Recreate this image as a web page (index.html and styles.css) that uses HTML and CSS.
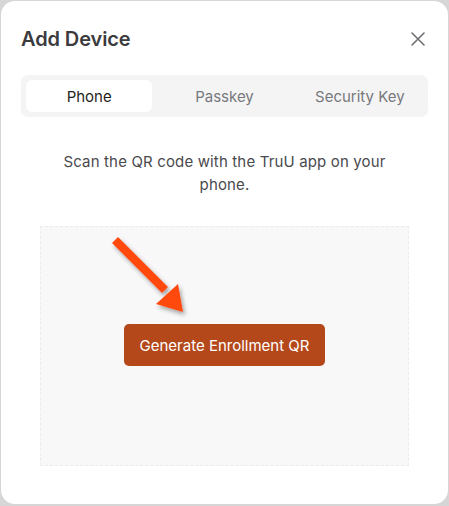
FILE: index.html
```html
<!DOCTYPE html>
<html>
<head>
<meta charset="utf-8">
<link rel="stylesheet" href="styles.css">
</head>
<body>
<div class="modal">
  <div class="header">
    <h1 class="title">Add Device</h1>
    <button class="close" aria-label="Close">
      <svg width="16" height="16" viewBox="0 0 16 16"><path d="M2 2L14 14M14 2L2 14" stroke="#6f6f73" stroke-width="1.6" stroke-linecap="round"/></svg>
    </button>
  </div>
  <div class="tabs">
    <div class="tab active">Phone</div>
    <div class="tab">Passkey</div>
    <div class="tab">Security Key</div>
  </div>
  <p class="desc">Scan the QR code with the TruU app on your phone.</p>
  <div class="qrbox">
    <svg class="arrow" width="100" height="100" viewBox="0 0 100 100">
      <defs>
        <filter id="sh" x="-20%" y="-20%" width="150%" height="150%">
          <feDropShadow dx="2" dy="3" stdDeviation="2" flood-color="#000" flood-opacity="0.35"/>
        </filter>
      </defs>
      <g filter="url(#sh)" fill="#ff4a0e">
        <path d="M9 13 L15 7 L65 57 L59 63 Z"/>
        <path d="M53 74 L75 54 L80 82 Z"/>
      </g>
    </svg>
    <button class="generate">Generate Enrollment QR</button>
  </div>
</div>
</body>
</html>
```
FILE: styles.css
```css
html, body {
  margin: 0;
  padding: 0;
}
body {
  background: #d6d6d6;
  width: 449px;
  height: 506px;
  font-family: "Inter", "Noto Sans", sans-serif;
  overflow: hidden;
}
.modal {
  box-sizing: border-box;
  margin: 1px 1px 0 1px;
  width: 447px;
  height: 503px;
  background: #fff;
  border-radius: 14px;
  padding: 20px 20px 0 20px;
  display: flex;
  flex-direction: column;
}
.header {
  display: flex;
  justify-content: space-between;
  align-items: center;
  height: 36px;
}
.title {
  margin: 0;
  font-size: 20px;
  font-weight: 600;
  color: #3b3b3e;
  letter-spacing: -0.1px;
}
.close {
  border: 0;
  background: none;
  padding: 0;
  width: 16px;
  height: 16px;
  margin-right: 2px;
  display: flex;
}
.tabs {
  margin-top: 18px;
  height: 42px;
  box-sizing: border-box;
  background: #f4f4f5;
  border-radius: 7px;
  padding: 5px;
  display: grid;
  grid-template-columns: repeat(3, 1fr);
  gap: 9px;
}
.tab {
  display: flex;
  align-items: center;
  justify-content: center;
  font-size: 15px;
  color: #78787c;
  border-radius: 6px;
}
.tab.active {
  background: #fff;
  color: #1f1f22;
}
.desc {
  margin: 33px 40px 0 40px;
  text-align: center;
  font-size: 15px;
  line-height: 23px;
  color: #4a4a4e;
  letter-spacing: 0.15px;
}
.qrbox {
  position: relative;
  margin: 30px 19px 0 19px;
  height: 240px;
  box-sizing: border-box;
  background: #f8f8f8;
  border: 1px dashed #ececec;
  display: flex;
  align-items: center;
  justify-content: center;
}
.arrow {
  position: absolute;
  left: 62px;
  top: 3px;
}
.generate {
  margin-top: -2px;
  width: 201px;
  height: 42px;
  border: 0;
  border-radius: 5px;
  background: #b4481b;
  color: #fff;
  font-family: "Inter", "Noto Sans", sans-serif;
  font-size: 15px;
  font-weight: 400;
}
```
